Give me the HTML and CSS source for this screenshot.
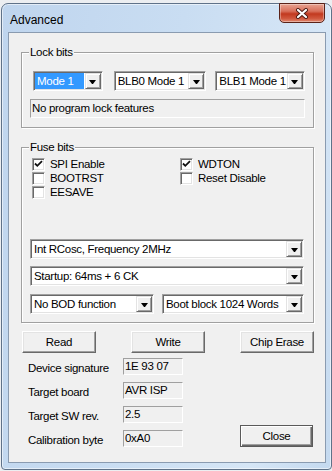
FILE: index.html
```html
<!DOCTYPE html>
<html lang="en">
<head>
    <meta charset="UTF-8">
    <title>Advanced</title>
    <link rel="stylesheet" href="styles.css">
</head>
<body>
    <div class="window">
        <div class="titlebar">
            <span class="title">Advanced</span>
            <div class="close-x">
                <svg width="14" height="11" viewBox="0 0 14 11">
                    <path d="M3 2 L11 9 M11 2 L3 9" stroke="#4a1a12" stroke-width="4" stroke-linecap="round"/>
                    <path d="M3 2 L11 9 M11 2 L3 9" stroke="#ffffff" stroke-width="2.2" stroke-linecap="round"/>
                </svg>
            </div>
        </div>

        <div class="client">
            <fieldset class="group lock">
                <legend>Lock bits</legend>
                <div class="combo-row">
                    <div class="combo w-mode"><span class="value selected">Mode 1</span><span class="arrow"></span></div>
                    <div class="combo w-blb0"><span class="value">BLB0 Mode 1</span><span class="arrow"></span></div>
                    <div class="combo w-blb1"><span class="value">BLB1 Mode 1</span><span class="arrow"></span></div>
                </div>
                <div class="static-box">No program lock features</div>
            </fieldset>

            <fieldset class="group fuse">
                <legend>Fuse bits</legend>
                <div class="checks">
                    <label class="check"><span class="box"><svg width="9" height="9" viewBox="0 0 9 9"><path d="M1 3.5 L3.3 5.8 L8 1.2" fill="none" stroke="#111" stroke-width="1.8"/></svg></span>SPI Enable</label>
                    <label class="check"><span class="box"><svg width="9" height="9" viewBox="0 0 9 9"><path d="M1 3.5 L3.3 5.8 L8 1.2" fill="none" stroke="#111" stroke-width="1.8"/></svg></span>WDTON</label>
                    <label class="check"><span class="box"></span>BOOTRST</label>
                    <label class="check"><span class="box"></span>Reset Disable</label>
                    <label class="check"><span class="box"></span>EESAVE</label>
                </div>
                <div class="combo wide clock"><span class="value">Int RCosc, Frequency 2MHz</span><span class="arrow"></span></div>
                <div class="combo wide startup"><span class="value">Startup: 64ms + 6 CK</span><span class="arrow"></span></div>
                <div class="combo-row bod-row">
                    <div class="combo w-bod"><span class="value">No BOD function</span><span class="arrow"></span></div>
                    <div class="combo w-boot"><span class="value">Boot block 1024 Words</span><span class="arrow"></span></div>
                </div>
            </fieldset>

            <div class="buttons">
                <button class="btn">Read</button>
                <button class="btn">Write</button>
                <button class="btn">Chip Erase</button>
            </div>

            <div class="info">
                <div class="fields">
                    <div class="info-row"><span class="info-label">Device signature</span><span class="field">1E 93 07</span></div>
                    <div class="info-row"><span class="info-label">Target board</span><span class="field">AVR ISP</span></div>
                    <div class="info-row"><span class="info-label">Target SW rev.</span><span class="field">2.5</span></div>
                    <div class="info-row"><span class="info-label">Calibration byte</span><span class="field">0xA0</span></div>
                </div>
                <button class="btn default">Close</button>
            </div>
        </div>
    </div>
</body>
</html>
```

FILE: styles.css
```css
body {
    margin: 0;
    background: #eceef1;
    font-family: "Liberation Sans", Arial, sans-serif;
    font-size: 11.5px;
    letter-spacing: -0.3px;
    color: #000;
}

/* window frame */
.window {
    box-sizing: border-box;
    width: 331px;
    height: 467px;
    margin: 3px 0 0 1px;
    padding: 0 5px 6px 6px;
    border: 1px solid #5f7289;
    border-radius: 7px 7px 4px 4px;
    background: linear-gradient(100deg, #bfd5ee 0%, #c9ddf2 45%, #d6e6f6 80%, #c4d9ef 100%);
    box-shadow: inset 0 0 0 1px rgba(255, 255, 255, 0.55);
    display: flex;
    flex-direction: column;
}

.titlebar {
    height: 28px;
    display: flex;
    justify-content: space-between;
    align-items: flex-start;
}

.title {
    margin: 9px 0 0 2px;
    font-size: 12px;
    line-height: 14px;
    letter-spacing: 0;
}

.close-x {
    box-sizing: border-box;
    width: 46px;
    height: 20px;
    margin: -1px 1px 0 0;
    border: 1px solid #5a2218;
    border-radius: 0 0 5px 5px;
    background: linear-gradient(#e8a391 0%, #d8705b 40%, #c2391f 55%, #d0573d 80%, #e08a72 100%);
    box-shadow: inset 0 0 0 1px rgba(255, 255, 255, 0.35);
    display: flex;
    align-items: center;
    justify-content: center;
}

.client {
    flex: 1;
    border: 1px solid #8a9bb0;
    background: #f0f0f0;
}

/* group boxes */
.group {
    box-sizing: border-box;
    width: 293px;
    min-width: 0;
    margin: 12px 0 0 12px;
    padding: 0 8px 8px;
    border: 1px solid #a0a0a0;
    box-shadow: inset 1px 1px 0 #fff, 1px 1px 0 #fff;
}

.group legend {
    margin-left: -1px;
    padding: 0 1px;
    line-height: 14px;
    background: #f0f0f0;
}

.lock {
    padding-bottom: 9px;
}

.combo-row {
    display: flex;
}

.lock .combo-row {
    margin: 12px 0 0 3px;
}

/* combo boxes */
.combo {
    box-sizing: border-box;
    height: 20px;
    padding: 1px;
    display: flex;
    background: #fff;
    border: 1px solid;
    border-color: #a0a0a0 #fff #fff #a0a0a0;
    box-shadow: inset 1px 1px 0 #696969, inset -1px -1px 0 #e3e3e3;
}

.combo .value {
    flex: 1;
    padding-left: 2px;
    line-height: 16px;
    white-space: nowrap;
    overflow: hidden;
}

.combo .value.selected {
    background: #3399ff;
    color: #fff;
    margin-right: 1px;
}

.combo .arrow {
    box-sizing: border-box;
    width: 16px;
    height: 16px;
    background: #f0f0f0;
    border: 1px solid;
    border-color: #e3e3e3 #696969 #696969 #e3e3e3;
    box-shadow: inset 1px 1px 0 #fff, inset -1px -1px 0 #a0a0a0;
    display: flex;
    align-items: center;
    justify-content: center;
}

.combo .arrow::after {
    content: "";
    width: 1px;
    border-left: 3px solid transparent;
    border-right: 3px solid transparent;
    border-top: 4px solid #000;
    margin-top: 1px;
}

.w-mode { width: 70px; margin-right: 11px; }
.w-blb0 { width: 93px; margin-right: 9px; }
.w-blb1 { width: 90px; }

.static-box {
    box-sizing: border-box;
    width: 275px;
    height: 19px;
    margin-top: 8px;
    padding-left: 1px;
    line-height: 17px;
    border: 1px solid;
    border-color: #a0a0a0 #fff #fff #a0a0a0;
}

/* fuse bits */
.fuse {
    margin-top: 12px;
}

.checks {
    display: grid;
    grid-template-columns: 148px 1fr;
    grid-auto-rows: 14px;
    margin: 3px 0 0 2px;
}

.check {
    display: flex;
    align-items: center;
}

.box {
    box-sizing: border-box;
    width: 13px;
    height: 13px;
    margin-right: 5px;
    padding: 1px;
    background: #fff;
    border: 1px solid;
    border-color: #a0a0a0 #fff #fff #a0a0a0;
    box-shadow: inset 1px 1px 0 #696969, inset -1px -1px 0 #e3e3e3;
}

.box svg {
    display: block;
}

.wide {
    width: 274px;
}

.clock {
    margin-top: 40px;
}

.startup {
    margin-top: 7px;
}

.bod-row {
    margin-top: 8px;
}

.w-bod { width: 124px; margin-right: 8px; }
.w-boot { width: 142px; }

/* buttons */
.buttons {
    display: flex;
    justify-content: space-between;
    margin: 8px 11px 0 13px;
}

.btn {
    box-sizing: border-box;
    width: 74px;
    height: 22px;
    padding: 0;
    font: inherit;
    letter-spacing: -0.3px;
    color: #000;
    background: #f0f0f0;
    border: 1px solid;
    border-color: #fff #696969 #696969 #fff;
    box-shadow: inset -1px -1px 0 #a0a0a0, inset 1px 1px 0 #e3e3e3;
}

.btn.default {
    width: 73px;
    border-color: #5a5a5a;
    box-shadow: inset 1px 1px 0 #fff, inset -1px -1px 0 #696969, inset -2px -2px 0 #a0a0a0;
}

/* device info */
.info {
    display: flex;
    justify-content: space-between;
    align-items: flex-end;
    margin: 5px 12px 0 19px;
}

.fields {
    display: flex;
    flex-direction: column;
    gap: 7px;
}

.info-row {
    display: flex;
    align-items: center;
}

.info-label {
    width: 95px;
    padding-top: 2px;
}

.field {
    box-sizing: border-box;
    width: 60px;
    height: 17px;
    padding-left: 1px;
    line-height: 15px;
    border: 1px solid;
    border-color: #a0a0a0 #fff #fff #a0a0a0;
}
```
